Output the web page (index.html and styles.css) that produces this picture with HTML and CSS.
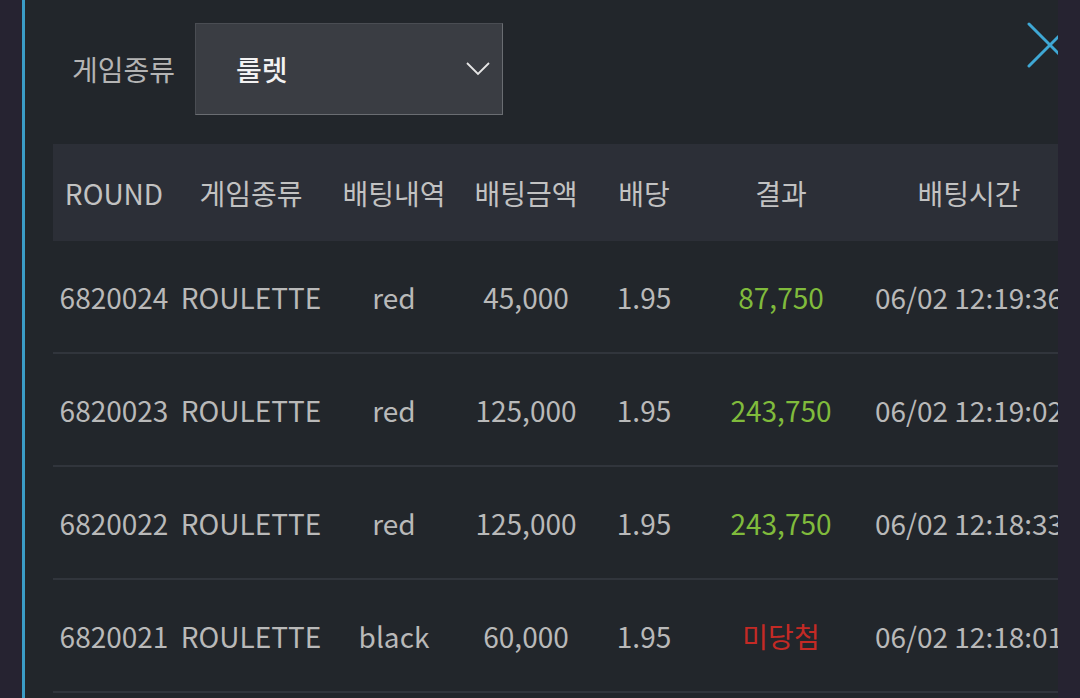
FILE: index.html
```html
<!DOCTYPE html>
<html lang="ko">
<head>
  <meta charset="UTF-8">
  <meta name="viewport" content="width=device-width, initial-scale=1.0">
  <title>배팅내역</title>
  <link rel="stylesheet" href="styles.css">
</head>
<body>

  <div class="panel">
    <button class="close" aria-label="닫기">
      <svg width="46" height="46" viewBox="0 0 46 46">
        <path d="M2 2 L44 44 M44 2 L2 44" stroke="#3fa8d5" stroke-width="3" stroke-linecap="round" fill="none"/>
      </svg>
    </button>

    <div class="filter">
      <span class="filter-label">게임종류</span>
      <div class="select">
        <span class="select-value">룰렛</span>
        <svg class="chevron" width="24" height="14" viewBox="0 0 24 14">
          <path d="M1 1 L12 12 L23 1" stroke="#e6e6e6" stroke-width="1.8" fill="none"/>
        </svg>
      </div>
    </div>

    <table class="history">
      <colgroup>
        <col class="c-round">
        <col class="c-game">
        <col class="c-pick">
        <col class="c-amount">
        <col class="c-odds">
        <col class="c-result">
        <col class="c-time">
      </colgroup>
      <thead>
        <tr>
          <th>ROUND</th>
          <th>게임종류</th>
          <th>배팅내역</th>
          <th>배팅금액</th>
          <th>배당</th>
          <th>결과</th>
          <th>배팅시간</th>
        </tr>
      </thead>
      <tbody>
        <tr>
          <td>6820024</td>
          <td>ROULETTE</td>
          <td>red</td>
          <td>45,000</td>
          <td>1.95</td>
          <td class="win">87,750</td>
          <td lang="en">06/02 12:19:36</td>
        </tr>
        <tr>
          <td>6820023</td>
          <td>ROULETTE</td>
          <td>red</td>
          <td>125,000</td>
          <td>1.95</td>
          <td class="win">243,750</td>
          <td lang="en">06/02 12:19:02</td>
        </tr>
        <tr>
          <td>6820022</td>
          <td>ROULETTE</td>
          <td>red</td>
          <td>125,000</td>
          <td>1.95</td>
          <td class="win">243,750</td>
          <td lang="en">06/02 12:18:33</td>
        </tr>
        <tr>
          <td>6820021</td>
          <td>ROULETTE</td>
          <td>black</td>
          <td>60,000</td>
          <td>1.95</td>
          <td class="lose">미당첨</td>
          <td lang="en">06/02 12:18:01</td>
        </tr>
      </tbody>
    </table>
  </div>

</body>
</html>
```

FILE: styles.css
```css
body {
  margin: 0;
  background-color: #262331;
  font-family: "Noto Sans CJK KR", "Noto Sans", sans-serif;
  color: #b9b9b9;
  height: 100vh;
  overflow: hidden;
}
.panel {
  position: relative;
  margin-left: 22px;
  width: 1036px;
  height: 100vh;
  border-left: 3px solid #3b9cc6;
  background-color: #22262b;
  overflow: hidden;
  padding: 23px 0 0 28px;
  box-sizing: border-box;
}
.close {
  position: absolute;
  top: 22px;
  right: -15px;
  padding: 0;
  background: none;
  border: none;
  cursor: pointer;
}
.close svg {
  display: block;
}
.filter {
  display: flex;
  align-items: center;
  gap: 20px;
  padding-left: 19px;
}
.filter-label {
  font-size: 28px;
  color: #b4b4b4;
}
.select {
  width: 308px;
  height: 92px;
  box-sizing: border-box;
  display: flex;
  align-items: center;
  justify-content: space-between;
  padding: 0 12px 0 40px;
  background-color: #3a3d43;
  border: 1px solid #4a4d53;
  border-bottom-color: #6a6d72;
  border-right-color: #6a6d72;
}
.select-value {
  font-size: 28px;
  font-weight: 500;
  color: #f2f2f2;
}
.chevron {
  display: block;
}
.history {
  margin-top: 29px;
  width: 1020px;
  table-layout: fixed;
  border-collapse: collapse;
  font-size: 28px;
}
.c-round { width: 122px; }
.c-game { width: 152px; }
.c-pick { width: 134px; }
.c-amount { width: 130px; }
.c-odds { width: 106px; }
.c-result { width: 168px; }
.c-time { width: 208px; }
.history th {
  height: 97px;
  padding: 0;
  background-color: #2c2f37;
  font-weight: 400;
  color: #c2c2c2;
  white-space: nowrap;
}
.history td {
  height: 111px;
  padding: 0;
  text-align: center;
  white-space: nowrap;
  border-bottom: 2px solid #31353c;
}
.history .win {
  color: #80bb3c;
}
.history .lose {
  color: #c42a25;
}
```
